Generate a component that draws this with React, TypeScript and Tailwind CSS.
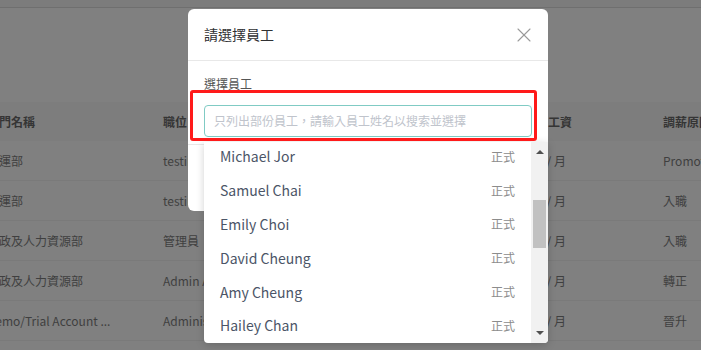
import { X } from 'lucide-react';

const rows = [
  { dept: '營運部', role: 'testing', pay: 'HK$ 20,000 / 月', reason: 'Promotion' },
  { dept: '營運部', role: 'testing', pay: 'HK$ 18,000 / 月', reason: '入職' },
  { dept: '行政及人力資源部', role: '管理員', pay: 'HK$ 30,000 / 月', reason: '入職' },
  { dept: '行政及人力資源部', role: 'Admin Assistant', pay: 'HK$ 15,000 / 月', reason: '轉正' },
  { dept: 'Demo/Trial Account ...', role: 'Administrator', pay: 'HK$ 25,000 / 月', reason: '晉升' },
];

const staff = ['Michael Jor', 'Samuel Chai', 'Emily Choi', 'David Cheung', 'Amy Cheung', 'Hailey Chan'];

export default function App() {
  return (
    <div className="relative w-[701px] h-[350px] overflow-hidden bg-[#808080] font-['Noto_Sans_CJK_TC','Noto_Sans',sans-serif]">
      <div className="h-[8px] bg-[#7c7c7c] border-b border-[#6f6f6f]" />

      {/* background table */}
      <div className="mt-[94px] ml-[-13px] w-[760px] text-[12px]">
        <div className="flex items-center h-[39px] bg-[#7d7d7d] font-bold text-[#353535]">
          <div className="w-[176px] shrink-0 whitespace-nowrap">部門名稱</div>
          <div className="w-[270px] shrink-0 whitespace-nowrap">職位</div>
          <div className="w-[139px] shrink-0 text-right whitespace-nowrap">基本工資</div>
          <div className="ml-[91px] shrink-0 whitespace-nowrap">調薪原因</div>
        </div>
        {rows.map((r, i) => (
          <div key={i} className="flex items-center h-[40px] border-b border-[#7a7a7a] text-[#3f3f3f]">
            <div className="w-[176px] shrink-0 whitespace-nowrap">{r.dept}</div>
            <div className="w-[270px] shrink-0 whitespace-nowrap">{r.role}</div>
            <div className="w-[139px] shrink-0 pr-[6px] text-right whitespace-nowrap">{r.pay}</div>
            <div className="ml-[91px] shrink-0 whitespace-nowrap">{r.reason}</div>
          </div>
        ))}
      </div>

      {/* modal */}
      <div className="absolute left-[188px] top-[9px] w-[360px] h-[202px] bg-white rounded-[6px]">
        <div className="h-[52px] flex items-center justify-between pl-4 pr-[12px] border-b border-[#e8e8e8]">
          <span className="text-[14px] text-[#303133]">請選擇員工</span>
          <X className="size-[24px] text-[#9a9a9a]" strokeWidth={1.1} />
        </div>
        <div className="px-4 pt-[15px]">
          <div className="text-[12px] leading-[16px] text-[#555]">選擇員工</div>
          <div className="mt-[13px] h-[32px] rounded-[4px] border border-[#80cbc4] flex items-center pl-[9px] text-[12px] text-[#c0c4cc]">
            只列出部份員工，請輸入員工姓名以搜索並選擇
          </div>
        </div>
        <div className="mt-[7px] border-t border-[#e8e8e8]" />
      </div>

      {/* dropdown */}
      <div className="absolute left-[204px] top-[142px] w-[344px] h-[201px] bg-white rounded-b-[4px] shadow-[0_2px_8px_rgba(0,0,0,0.18)] flex overflow-hidden">
        <div className="flex-1 overflow-hidden">
          <div className="mt-[-2px]">
            {staff.map((n) => (
              <div key={n} className="h-[33.8px] flex items-center justify-between px-4">
                <span className="text-[14px] text-[#4b5567]">{n}</span>
                <span className="text-[12px] text-[#8c8c8c]">正式</span>
              </div>
            ))}
          </div>
        </div>
        <div className="w-[17px] bg-[#f1f1f1] flex flex-col items-center">
          <div className="mt-[8px] w-0 h-0 border-l-[4px] border-r-[4px] border-b-[4px] border-l-transparent border-r-transparent border-b-[#505050]" />
          <div className="mt-[46px] w-[13px] h-[48px] bg-[#c1c1c1]" />
          <div className="mt-auto mb-[8px] w-0 h-0 border-l-[4px] border-r-[4px] border-t-[4px] border-l-transparent border-r-transparent border-t-[#505050]" />
        </div>
      </div>

      {/* annotation */}
      <div className="absolute left-[190px] top-[90px] w-[347px] h-[51px] border-[3px] border-[#ff1a1a] rounded-[3px]" />
    </div>
  );
}
